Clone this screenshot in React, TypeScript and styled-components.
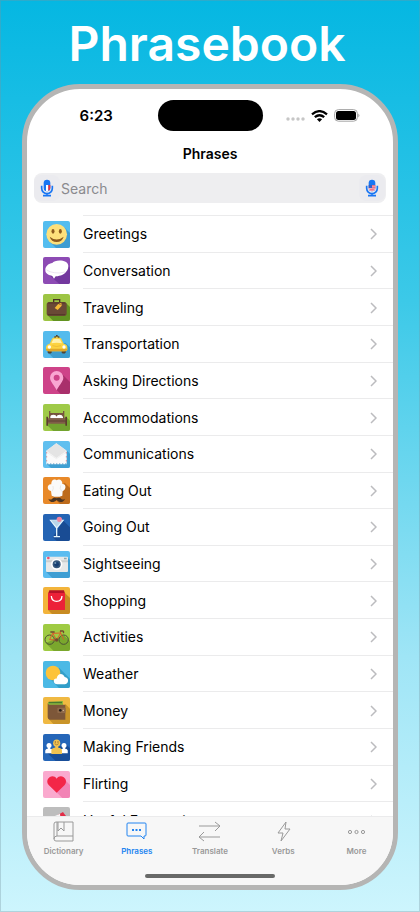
import React from 'react';
import styled, { createGlobalStyle } from 'styled-components';

const GlobalStyle = createGlobalStyle`
  *, *::before, *::after { box-sizing: border-box; }
  body { margin: 0; font-family: Inter, "Liberation Sans", sans-serif; color: #000; }
`;

const Page = styled.main`
  display: flex;
  flex-direction: column;
  height: 100vh;
  padding: 0 22px;
  padding-bottom: 22px;
  background: linear-gradient(180deg, #05b7e2 0%, #3cc9e8 33%, #9fe5f6 72%, #cdf5fd 100%);
  box-shadow: inset 0 0 0 1px rgba(120, 150, 160, 0.35);
`;

const Headline = styled.h1`
  flex: none;
  margin: 0;
  padding: 4px 6px 0 0;
  height: 84px;
  font-size: 48px;
  line-height: 80px;
  font-weight: 600;
  text-align: center;
  color: #fff;
`;

const Phone = styled.section`
  flex: 1;
  min-height: 0;
  display: flex;
  flex-direction: column;
  border: 5px solid #b5b5b4;
  border-radius: 58px;
  background: #fff;
  overflow: hidden;
`;

const StatusBar = styled.div`
  flex: none;
  display: grid;
  grid-template-columns: 1fr 105px 1fr;
  align-items: center;
  padding-top: 11px;
`;

const Clock = styled.time`
  padding-left: 8px;
  text-align: center;
  font-size: 15px;
  line-height: 20px;
  font-weight: 600;
`;

const Island = styled.div`
  height: 31px;
  border-radius: 16px;
  background: #000;
`;

const StatusIcons = styled.div`
  display: flex;
  align-items: center;
  justify-content: flex-end;
  gap: 6px;
  padding-right: 33px;
`;

const NavTitle = styled.h2`
  flex: none;
  margin: 0;
  padding: 13px 0 9px;
  font-size: 14px;
  line-height: 20px;
  font-weight: 600;
  text-align: center;
`;

const SearchBar = styled.form`
  flex: none;
  display: flex;
  align-items: center;
  height: 30px;
  margin: 0 7px 12px;
  border-radius: 8px;
  background: #eeeef0;
`;

const MicButton = styled.button`
  display: flex;
  align-items: center;
  justify-content: center;
  width: 26px;
  height: 26px;
  margin: 0 1px 0 0;
  padding: 0;
  border: 0;
  border-radius: 7px;
  background: #ebebef;
`;

const SearchInput = styled.input`
  flex: 1;
  min-width: 0;
  height: 30px;
  padding: 0;
  border: 0;
  outline: 0;
  background: transparent;
  font: 400 14px/20px Inter, "Liberation Sans", sans-serif;
  color: #000;
  &::placeholder { color: #8a8a8e; opacity: 1; }
`;

const ListArea = styled.div`
  flex: 1;
  min-height: 0;
  overflow-y: auto;
  scrollbar-width: none;
`;

const List = styled.ul`
  display: grid;
  grid-auto-rows: 1fr;
  min-height: 623px;
  margin: 0;
  padding: 0;
  list-style: none;
`;

const RowLink = styled.a`
  display: flex;
  align-items: center;
  gap: 13px;
  height: 100%;
  padding-left: 16px;
  color: inherit;
  text-decoration: none;
`;

const RowBody = styled.span`
  flex: 1;
  display: flex;
  align-items: center;
  justify-content: space-between;
  height: 100%;
  padding: 1px 16px 0 0;
  border-top: 1px solid #ebebec;
  font-size: 14px;
  line-height: 20px;
`;

const Tile = styled.svg`
  flex: none;
  width: 27px;
  height: 27px;
  margin-top: 2px;
  border-radius: 2px;
`;

const TabBar = styled.nav`
  flex: none;
  border-top: 1px solid #ebebec;
  background: #f7f7f7;
`;

const Tabs = styled.div`
  display: grid;
  grid-template-columns: repeat(5, 1fr);
`;

const Tab = styled.button<{ $active?: boolean }>`
  display: flex;
  flex-direction: column;
  align-items: center;
  gap: 3px;
  padding: 4px 0 0;
  border: 0;
  background: transparent;
  color: ${(p) => (p.$active ? '#2284f0' : '#999')};
  font: 600 8px/12px Inter, "Liberation Sans", sans-serif;
`;

const HomeIndicator = styled.div`
  width: 130px;
  height: 4px;
  margin: 17px auto 7px;
  border-radius: 2px;
  background: #686968;
`;

function Mic({ flag }: { flag: 'fr' | 'us' }) {
  return (
    <svg width="14" height="18" viewBox="0 0 42 54" aria-hidden="true">
      <rect x="11" y="2" width="20" height="35" rx="10" fill="#1976f3" />
      {flag === 'fr' ? (
        <>
          <rect x="18" y="18" width="7" height="18" fill="#fff" />
          <path d="M25 18h6v9a9 9 0 0 1-6 8z" fill="#f3303c" />
        </>
      ) : (
        <>
          <path d="M11 19h20v8a10 10 0 0 1-20 0z" fill="#f2aab8" />
          <path d="M20 19h11v3H20zM20 25h11v3H20zM14 31h14l-3 3h-8z" fill="#ee6275" />
          <rect x="11" y="18" width="10" height="9" fill="#3260c8" />
        </>
      )}
      <path d="M5 20v8a16 16 0 0 0 32 0v-8M21 44v6M9 50h24" fill="none" stroke="#1976f3" strokeWidth="5" />
    </svg>
  );
}

const Person = ({ x, y, s, fill }: { x: number; y: number; s: number; fill: string }) => (
  <g transform={`translate(${x} ${y}) scale(${s})`} fill={fill}>
    <circle cx="0" cy="-9" r="10" />
    <path d="M-4-3h8v6q10 2 11 8v11h-30V11q1-6 11-8z" />
  </g>
);

const Wheel = ({ cx }: { cx: number }) => (
  <circle cx={cx} cy="47" r="14" fill="none" stroke="#4b5136" strokeWidth="3" />
);

type Entry = { label: string; bg: string; shade: string; shadow: string; art: React.ReactNode };

const entries: Entry[] = [
  {
    label: 'Greetings', bg: '#54bdef', shade: '#3d9dd2', shadow: 'M19 61 62 17 81 36V81H39z',
    art: (
      <>
        <circle cx="41" cy="40" r="31" fill="#fde07b" />
        <ellipse cx="30" cy="31" rx="4.5" ry="7" fill="#8c5a1d" />
        <ellipse cx="52" cy="31" rx="4.5" ry="7" fill="#8c5a1d" />
        <path d="M20 47q21 17 42 0-5 16-21 16T20 47z" fill="#8c5a1d" />
      </>
    ),
  },
  {
    label: 'Conversation', bg: '#8d4bb4', shade: '#73389e', shadow: 'M14 50 72 22 81 32V81H49z',
    art: (
      <>
        <path d="M7 40C6 27 18 19 28 18 34 8 76 6 76 28 76 38 71 43 67 47 62 54 44 58 38 58L33 65 28 57C17 55 7 50 7 40z" fill="#fff" />
        <path d="M10 38Q20 46 34 47 48 50 66 45" fill="none" stroke="#e2d6ea" strokeWidth="2" />
      </>
    ),
  },
  {
    label: 'Traveling', bg: '#9dc544', shade: '#629321', shadow: 'M13 63 69 27 81 39V81H31z',
    art: (
      <>
        <path d="M32 28V17h18v11" fill="none" stroke="#493126" strokeWidth="4" />
        <rect x="11" y="24" width="60" height="42" rx="8" fill="#6a4936" />
        <path d="M15 27h52M15 62h52" stroke="#543728" strokeWidth="3" />
        <path d="m35 42 10-11 10-5 1 9-12 13z" fill="#f4b936" />
        <circle cx="51" cy="31" r="2" fill="#704f36" />
      </>
    ),
  },
  {
    label: 'Transportation', bg: '#55bbed', shade: '#3c9dce', shadow: 'M15 65 67 35 81 49V81H31z',
    art: (
      <>
        <path d="M31 20q10-12 20 0z" fill="#fbce3c" />
        <path d="M34 16h5v5h-5zM44 16h5v5h-5zM39 12h5v5h-5z" fill="#484337" />
        <path d="M14 57h12v8q-6 5-12 0zM56 57h12v8q-6 5-12 0z" fill="#4c4435" />
        <path d="M20 38 28 22Q41 17 54 22L62 38Q73 40 73 49V56Q71 61 64 61H18Q10 61 9 55V48Q10 40 20 38z" fill="#fcd340" />
        <path d="m25 37 6-12q10-4 20 0l6 12q-16-3-32 0z" fill="#fff2ae" />
        <path d="M9 53h64v4q-2 4-9 4H18q-8 0-9-4z" fill="#dfa72a" />
        <circle cx="19" cy="48" r="5" fill="#fff" /><circle cx="63" cy="48" r="5" fill="#fff" />
        <path d="M28 44q13 5 26 0" fill="none" stroke="#e6b132" strokeWidth="2" />
      </>
    ),
  },
  {
    label: 'Asking Directions', bg: '#ce4389', shade: '#a92f6b', shadow: 'M41 69 57 21 81 45V81H53z',
    art: <path fillRule="evenodd" d="M41 70C36 57 21 44 21 32a20 20 0 0 1 40 0C61 44 46 57 41 70zM41 23a9 9 0 1 0 0 18 9 9 0 0 0 0-18z" fill="#f9a6d2" />,
  },
  {
    label: 'Accommodations', bg: '#9fca48', shade: '#72a32f', shadow: 'M11 62 70 39 81 50V81H31z',
    art: (
      <>
        <path d="M18 21h4v6h38v-6h4v28H18z" fill="#76543f" />
        <path d="M22 39q0-7 9-7 9 0 9 6 2-6 10-6t10 7v4H22z" fill="#fff" />
        <path d="M14 43h54v16H14z" fill="#805d48" />
        <path d="M10 38h5v27h-5zM67 38h5v27h-5z" fill="#5a3c2e" />
        <path d="M13 51h56" stroke="#5d4032" strokeWidth="3" />
      </>
    ),
  },
  {
    label: 'Communications', bg: '#60bfef', shade: '#3e9fd2', shadow: 'M12 69 70 27 81 38V81H24z',
    art: (
      <>
        <path d="M10 29 40 7 71 29V70H10z" fill="#fafafa" />
        <path d="M10 29 40 7 71 29 40 51z" fill="#e4e4e4" />
        <path d="m10 33 30 20 31-20" fill="none" stroke="#efefef" strokeWidth="3" />
        <path d="M11 34v36M70 34v36" stroke="#db6a76" strokeWidth="3" strokeDasharray="3 9" />
        <path d="M12 69h58" stroke="#4c95c5" strokeWidth="3" strokeDasharray="4 5" />
      </>
    ),
  },
  {
    label: 'Eating Out', bg: '#e88929', shade: '#bd6b1c', shadow: 'M25 55 65 17 81 33V81H51z',
    art: (
      <>
        <path d="M24 42C10 40 12 20 25 22 24 6 38 5 41 10 48 4 59 9 58 21 71 20 70 39 59 42L58 56Q41 63 26 56z" fill="#fafafa" />
        <path d="M30 27q3 9-3 16M53 25q-4 10 3 18" fill="none" stroke="#e3e0dd" strokeWidth="2" />
        <path d="M41 64Q32 59 27 66 23 70 16 65 20 76 31 75 38 74 41 69 44 74 51 75 62 76 66 65 59 70 55 66 50 59 41 64z" fill="#493525" />
      </>
    ),
  },
  {
    label: 'Going Out', bg: '#2464b4', shade: '#194c94', shadow: 'M29 70 61 20 81 40V81H41z',
    art: (
      <>
        <circle cx="49" cy="16" r="8" fill="#ef7c9e" />
        <path d="M19 17h45L43 43v23h8v4H32v-4h7V43z" fill="#e4f4fc" />
        <path d="M24 19h35L41 39z" fill="#b7d5ea" />
        <circle cx="49" cy="17" r="7" fill="#ef86a0" />
      </>
    ),
  },
  {
    label: 'Sightseeing', bg: '#5bbcf0', shade: '#3e9ed3', shadow: 'M9 62 75 21 81 27V81H28z',
    art: (
      <>
        <rect x="9" y="17" width="66" height="46" rx="3" fill="#e7e9e9" />
        <path d="M9 28h66v6H9z" fill="#cbcfcf" />
        <circle cx="41" cy="40" r="17" fill="#fff" />
        <circle cx="41" cy="40" r="12" fill="#35577b" />
        <circle cx="41" cy="40" r="7" fill="#173f72" />
        <circle cx="37" cy="36" r="3" fill="#7397b3" />
        <circle cx="16" cy="21" r="4" fill="#ef506f" />
        <path d="M63 20h8v5h-8z" fill="#8fa6af" />
      </>
    ),
  },
  {
    label: 'Shopping', bg: '#f3b43b', shade: '#c88b22', shadow: 'M15 69 65 17 81 33V81H27z',
    art: (
      <>
        <path d="M19 10h44l3 10H15z" fill="#b41328" />
        <path d="M15 18h51v51H15z" fill="#ec2138" />
        <path d="M25 27q1 16 16 16t16-16" fill="none" stroke="#fff" strokeWidth="4" />
      </>
    ),
  },
  {
    label: 'Activities', bg: '#9fcb43', shade: '#7aa72d', shadow: 'M8 57 63 34 81 52V81H32z',
    art: (
      <>
        <Wheel cx={20} /><Wheel cx={62} />
        <path d="M20 47 29 28 53 27 41 48 20 47M41 48 28 26M62 47 53 27 51 21" fill="none" stroke="#dd5a2b" strokeWidth="3" />
        <path d="M22 24h13M51 21h9q4 3 0 6" fill="none" stroke="#704a30" strokeWidth="4" />
        <circle cx="41" cy="48" r="5" fill="#704a30" />
      </>
    ),
  },
  {
    label: 'Weather', bg: '#4bb9e5', shade: '#319ec9', shadow: 'M14 46 48 20 81 53V81H48z',
    art: (
      <>
        <circle cx="30" cy="36" r="22" fill="#fdc33a" />
        <path d="M43 70C28 69 30 51 41 53 42 38 59 33 65 48 79 49 78 68 66 70z" fill="#fff" />
      </>
    ),
  },
  {
    label: 'Money', bg: '#f0b942', shade: '#c99429', shadow: 'M16 65 68 22 81 35V81H31z',
    art: (
      <>
        <path d="M15 16 60 12v14H15z" fill="#8dba3c" />
        <path d="M17 14h40v5H17z" fill="#497930" />
        <path d="M14 17q0 6 6 6h47v45H20q-6-1-6-7z" fill="#7d5739" />
        <rect x="43" y="32" width="25" height="16" rx="3" fill="#916b4b" />
        <circle cx="52" cy="40" r="4" fill="#241d18" />
        <circle cx="61" cy="40" r="2" fill="#ddc4a3" />
      </>
    ),
  },
  {
    label: 'Making Friends', bg: '#2566b8', shade: '#194e98', shadow: 'M9 53 69 31 81 43V81H38z',
    art: (
      <>
        <Person x={18} y={41} s={0.75} fill="#fff" /><Person x={63} y={41} s={0.75} fill="#fff" />
        <Person x={41} y={37} s={1.06} fill="#f2c34f" />
        <path d="M35 29q6 7 12 0" fill="none" stroke="#886133" strokeWidth="2" />
        <circle cx="37" cy="24" r="2" fill="#886133" /><circle cx="45" cy="24" r="2" fill="#886133" />
      </>
    ),
  },
  {
    label: 'Flirting', bg: '#faa9ce', shade: '#f283b5', shadow: 'M36 59 64 25 81 42V81H58z',
    art: <path d="M41 65 17 42C3 26 28 5 41 23 54 5 79 26 65 42z" fill="#f32648" />,
  },
  {
    label: 'Useful Expressions', bg: '#bdbdbd', shade: '#949494', shadow: 'M12 64 65 23 81 39V81H29z',
    art: (
      <>
        <path d="M44 24 60 15 70 29V65L20 70z" fill="#e32c47" />
        <path d="M27 31 51 20 54 50 30 68z" fill="#f5f5f5" />
      </>
    ),
  },
];

const tabs = [
  {
    label: 'Dictionary',
    art: <path d="M1 18V3q0-2 2-2h17v19H3q-2 0-2-2 0-3 3-3h16M4 1v14M5 1v9l3-3 3 3V1" />,
  },
  {
    label: 'Phrases',
    art: (
      <>
        <path d="M2 2h17q1 0 1 1v11q0 1-1 1h-1v3l-3-3H2q-1 0-1-1V3q0-1 1-1z" />
        <path d="M6 9h2M9.500 9h2M13 9h2" strokeWidth="2" />
      </>
    ),
  },
  { label: 'Translate', art: <path d="M0 5h21l-5-4M21 5l-5 5M21 16H0l5-5M0 16l5 4" /> },
  { label: 'Verbs', art: <path d="M13 1 5 12h5L8 20l9-12h-5z" strokeLinejoin="round" /> },
  {
    label: 'More',
    art: <><circle cx="4" cy="11" r="1.6" /><circle cx="10.500" cy="11" r="1.6" /><circle cx="17" cy="11" r="1.6" /></>,
  },
];

export default function App() {
  return (
    <>
      <GlobalStyle />
      <Page>
        <Headline>Phrasebook</Headline>
        <Phone>
          <StatusBar>
            <Clock>6:23</Clock>
            <Island />
            <StatusIcons>
              <svg width="19" height="11" viewBox="0 0 19 11" fill="#c6c6c6">
                <circle cx="2" cy="9" r="1.700" /><circle cx="7" cy="9" r="1.700" />
                <circle cx="12" cy="9" r="1.700" /><circle cx="17" cy="9" r="1.700" />
              </svg>
              <svg width="17" height="12" viewBox="0 0 17 12" fill="none" stroke="#000" strokeWidth="2.300">
                <path d="M1 4.300Q8.500-2 16 4.300M3.800 7.200q4.700-4 9.400 0" />
                <path d="M5.900 9.200q2.600-2 5.200 0L8.500 12z" fill="#000" stroke="none" />
              </svg>
              <svg width="26" height="13" viewBox="0 0 26 13">
                <rect x="0.600" y="0.600" width="22.800" height="11.600" rx="3.800" fill="none" stroke="#a5a5a5" />
                <rect x="2" y="2" width="20" height="9" rx="2.500" />
                <path d="M24.400 4.500q2 2 0 4z" fill="#999" />
              </svg>
            </StatusIcons>
          </StatusBar>
          <NavTitle>Phrases</NavTitle>
          <SearchBar role="search">
            <MicButton type="button" aria-label="Speak French"><Mic flag="fr" /></MicButton>
            <SearchInput type="text" placeholder="Search" aria-label="Search" />
            <MicButton type="button" aria-label="Speak English"><Mic flag="us" /></MicButton>
          </SearchBar>
          <ListArea>
            <List>
              {entries.map((e) => (
                <li key={e.label}>
                  <RowLink href="#">
                    <Tile viewBox="0 0 81 81" aria-hidden="true">
                      <rect width="81" height="81" fill={e.bg} />
                      <path d={e.shadow} fill={e.shade} />
                      {e.art}
                    </Tile>
                    <RowBody>
                      {e.label}
                      <svg width="8" height="12" viewBox="0 0 8 12" fill="none" stroke="#bcbcbf" strokeWidth="1.500" aria-hidden="true">
                        <path d="m2 1 5 5-5 5" />
                      </svg>
                    </RowBody>
                  </RowLink>
                </li>
              ))}
            </List>
          </ListArea>
          <TabBar>
            <Tabs>
              {tabs.map((t) => (
                <Tab key={t.label} type="button" $active={t.label === 'Phrases'}>
                  <svg width="21" height="21" viewBox="0 0 21 21" fill="none" stroke="currentColor" aria-hidden="true">{t.art}</svg>
                  {t.label}
                </Tab>
              ))}
            </Tabs>
            <HomeIndicator />
          </TabBar>
        </Phone>
      </Page>
    </>
  );
}
